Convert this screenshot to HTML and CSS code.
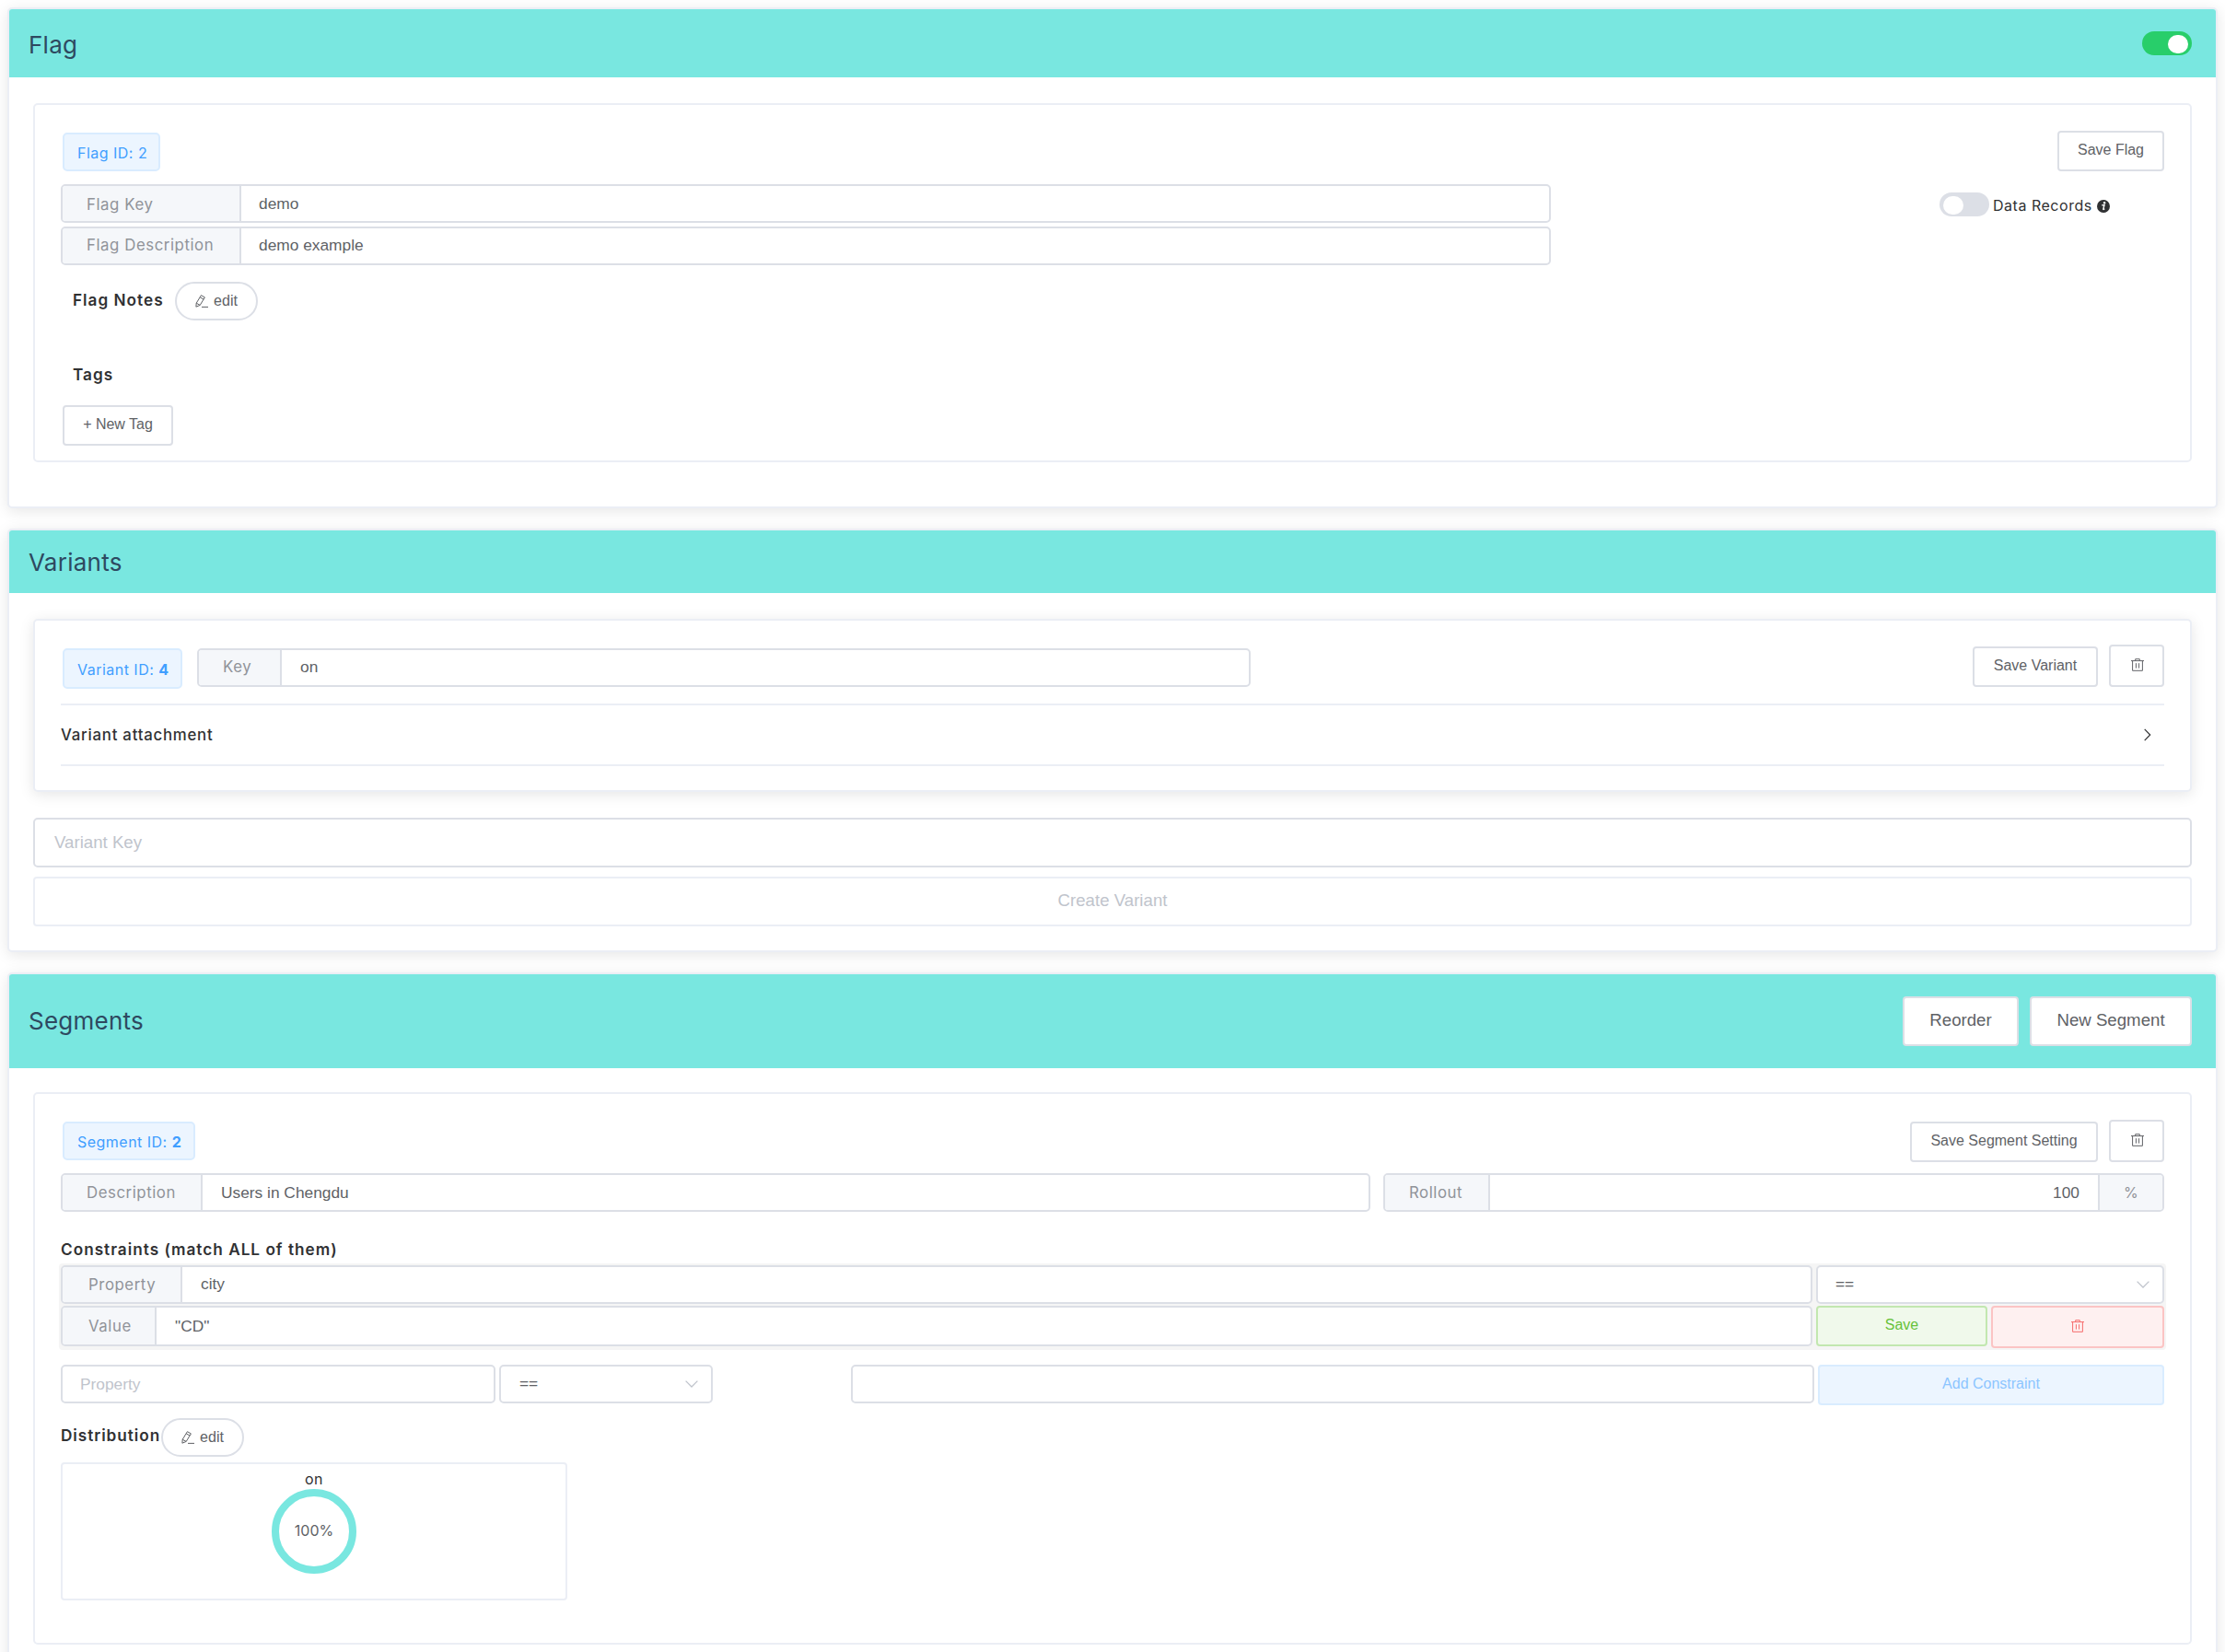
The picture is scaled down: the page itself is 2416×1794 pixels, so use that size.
FILE: index.html
```html
<!DOCTYPE html>
<html lang="en">
<head>
<meta charset="utf-8">
<title>Flag</title>
<link rel="stylesheet" href="styles.css">
</head>
<body>
<svg class="sprite" aria-hidden="true">
  <symbol id="trash" viewBox="0 0 14 14"><path d="M0 2.6H14M4.7 2.5V.7H9.3V2.5M1.6 2.6V13.3H12.4V2.6M5.4 5.2V10.6M8.6 5.2V10.6"/></symbol>
  <symbol id="pencil" viewBox="0 0 14 14"><path d="M.9 13.2L1.2 9.2L6.4 .7L10.4 2.9L5.2 11.4ZM5.2 2.8L9 5M1.2 9.2L5.2 11.4M7 13.4H14"/></symbol>
  <symbol id="down" viewBox="0 0 14 8"><path d="M.6 .6L7 7L13.4 .6"/></symbol>
  <symbol id="right" viewBox="0 0 8 14"><path d="M.7 .8L6.7 7L.7 13.2"/></symbol>
</svg>
<main class="page">
  <section class="card flag-card">
    <header class="card-header"><h2>Flag</h2><span class="switch on"></span></header>
    <div class="card-body">
      <div class="panel flag-panel">
        <div class="row between flag-top"><span class="tag flag-tag">Flag ID: 2</span><button class="btn save-flag">Save Flag</button></div>
        <div class="row between">
          <div class="flag-fields">
            <div class="field"><label class="addon flag-label"><span>Flag Key</span></label><div class="value">demo</div></div>
            <div class="field"><label class="addon flag-label"><span>Flag Description</span></label><div class="value">demo example</div></div>
          </div>
          <div class="row records"><span class="switch"></span><span class="records-label">Data Records</span>
            <svg class="info" viewBox="0 0 14 14"><circle cx="7" cy="7" r="7" fill="#303133"/><circle cx="8.1" cy="3.3" r="1.2" fill="#fff"/><path d="M5.2 5.9L8 5.5L6.8 10.2Q6.9 10.8 8.3 9.8" fill="none" stroke="#fff" stroke-width="1.4"/></svg></div>
        </div>
        <div class="row notes"><h5>Flag Notes</h5><button class="btn round"><svg class="icon"><use href="#pencil"/></svg>edit</button></div>
        <h5 class="tags-title">Tags</h5>
        <button class="btn new-tag">+ New Tag</button>
      </div>
    </div>
  </section>

  <section class="card variants-card">
    <header class="card-header"><h2>Variants</h2></header>
    <div class="card-body">
      <div class="panel variant-panel">
        <div class="row variant-top">
          <span class="tag variant-tag">Variant ID: <b>4</b></span>
          <div class="field variant-key"><label class="addon key-label"><span>Key</span></label><div class="value">on</div></div>
          <div class="row actions"><button class="btn save-variant">Save Variant</button><button class="btn trash"><svg class="icon"><use href="#trash"/></svg></button></div>
        </div>
        <div class="row between attachment"><span>Variant attachment</span><svg class="arrow-right"><use href="#right"/></svg></div>
      </div>
      <div class="input large">Variant Key</div>
      <button class="btn create">Create Variant</button>
    </div>
  </section>

  <section class="card segments-card">
    <header class="card-header"><h2>Segments</h2><div class="row header-actions"><button class="btn big reorder">Reorder</button><button class="btn big new-segment">New Segment</button></div></header>
    <div class="card-body">
      <div class="panel segment-panel">
        <div class="row between segment-top">
          <span class="tag segment-tag">Segment ID: <b>2</b></span>
          <div class="row actions"><button class="btn save-segment">Save Segment Setting</button><button class="btn trash"><svg class="icon"><use href="#trash"/></svg></button></div>
        </div>
        <div class="row segment-fields">
          <div class="field description"><label class="addon description-label"><span>Description</span></label><div class="value">Users in Chengdu</div></div>
          <div class="field rollout"><label class="addon rollout-label"><span>Rollout</span></label><div class="value end">100</div><span class="addon percent">%</span></div>
        </div>
        <h5 class="constraints-title">Constraints (match ALL of them)</h5>
        <div class="constraint">
          <div class="field"><label class="addon property-label"><span>Property</span></label><div class="value">city</div></div>
          <div class="input select"><span>==</span><svg class="arrow-down"><use href="#down"/></svg></div>
          <div class="field tall"><label class="addon value-label"><span>Value</span></label><div class="value">"CD"</div></div>
          <div class="row constraint-actions"><button class="btn success">Save</button><button class="btn danger"><svg class="icon"><use href="#trash"/></svg></button></div>
        </div>
        <div class="row new-constraint">
          <div class="input property">Property</div>
          <div class="input select operator"><span>==</span><svg class="arrow-down"><use href="#down"/></svg></div>
          <div class="input new-value"></div>
          <button class="btn add">Add Constraint</button>
        </div>
        <div class="row distribution-title"><h5>Distribution</h5><button class="btn round"><svg class="icon"><use href="#pencil"/></svg>edit</button></div>
        <div class="distribution"><span class="dist-name">on</span><div class="ring">100%</div></div>
      </div>
    </div>
  </section>
</main>
</body>
</html>
```
FILE: styles.css
```css
* { box-sizing: border-box; }
body { margin: 0; background: #fff; color: #303133; font-family: Inter, sans-serif; font-size: 16px; }
h2, h5 { margin: 0; }
.sprite { position: absolute; width: 0; height: 0; }
svg { fill: none; stroke: currentColor; flex: none; display: block; }
.page { height: 1794px; padding: 8px; overflow: hidden; }
.row { display: flex; align-items: flex-start; }
.between { justify-content: space-between; }

.card { border: 2px solid #ebeef5; border-radius: 5px; background: #fff; box-shadow: 0 3px 16px rgba(0,0,0,.1); margin-bottom: 22px; }
.card-header { display: flex; justify-content: space-between; padding: 0 26px 0 21px; background: #79e7e0; border-radius: 3px 3px 0 0; color: #2e4960; align-items: center; }
.card-header h2 { font-weight: 400; font-size: 26px; letter-spacing: .25px; }
.flag-card { height: 544px; }
.flag-card .card-header { height: 74px; }
.flag-card h2 { padding-top: 2px; }
.flag-card .switch { margin-top: -1px; }
.variants-card { height: 460px; }
.variants-card .card-header { height: 68px; }
.segments-card { height: 760px; }
.segments-card .card-header { height: 102px; }
.segments-card h2 { padding-bottom: 1px; }
.card-body { padding: 28px 26px; }
.segments-card .card-body { padding-top: 26px; }

.panel { border: 2px solid #ebeef5; border-radius: 5px; background: #fff; padding: 0 28px; }
.flag-panel { height: 390px; padding-top: 28px; }
.flag-top { height: 58px; }

.tag { display: flex; align-items: center; height: 44px; margin-left: 2px; padding-left: 14px; border: 2px solid #d9ecff; border-radius: 5px; background: #ecf5ff; color: #409eff; font-size: 16px; letter-spacing: .48px; white-space: pre; padding-top: 1px; }
.flag-tag { width: 106px; height: 42px; margin-top: 2px; }
.variant-tag { width: 130px; margin-top: 4px; }
.segment-tag { width: 144px; height: 42px; margin-top: 2px; }

.btn { display: flex; align-items: center; justify-content: center; height: 44px; padding: 0 0 3px; border: 2px solid #dcdfe6; border-radius: 4px; background: #fff; color: #606266; font: 16px "Liberation Sans", Arial, sans-serif; }
.save-flag { width: 116px; }
.icon { width: 14px; height: 14px; }
.round { width: 90px; height: 42px; padding: 0; border-radius: 21px; gap: 6px; }
.new-tag { width: 120px; margin: 0 0 0 2px; }
.trash { width: 60px; height: 46px; padding: 0 0 2px 2px; }

.switch { position: relative; display: block; width: 54px; height: 26px; border-radius: 13px; background: #dcdfe6; flex: none; }
.switch::after { content: ""; position: absolute; left: 4px; top: 4px; width: 22px; height: 20px; border-radius: 10px; background: #fff; }
.switch.on { background: #28ce6a; }
.switch.on::after { left: 28px; }
.records { width: 244px; padding-top: 10px; align-items: center; }
.records-label { width: 117px; flex: none; padding: 1px 0 0 4px; letter-spacing: .52px; white-space: nowrap; }
.info { width: 14px; height: 14px; stroke: none; margin-top: 2px; }

.flag-fields { width: 1618px; display: grid; gap: 4px; }
.field { display: flex; height: 42px; border: 2px solid #dcdfe6; border-radius: 5px; background: #fff; overflow: hidden; }
.addon { display: flex; align-items: center; flex: none; padding-left: 26px; background: #f5f7fa; color: #909399; border-right: 2px solid #dcdfe6; font-size: 16.8px; letter-spacing: .56px; }
.value { display: flex; align-items: center; flex: 1; padding: 0 20px; color: #606266; font: 17.33px "Liberation Sans", Arial, sans-serif; }
.flag-label { width: 194px; }
.flag-fields .value { padding-left: 19px; }
.flag-fields .field:first-child > * { padding-top: 1px; }
.flag-fields .field:last-child > * { padding-bottom: 2px; }

h5 { font-size: 17.2px; font-weight: 600; letter-spacing: 1px; white-space: nowrap; }
.notes { margin-top: 18px; padding-left: 13px; height: 42px; }
.notes h5 { width: 111px; padding-top: 9px; }
.tags-title { height: 44px; margin: 48px 0 0 13px; }

.variant-panel { height: 188px; padding-top: 26px; box-shadow: 0 3px 16px rgba(0,0,0,.1); }
.variant-top { height: 64px; }
.variant-key { width: 1144px; margin: 4px 0 0 16px; }
.variant-key > * { padding-bottom: 2px; }
.key-label { width: 90px; }
.actions { gap: 12px; margin-left: auto; }
.actions .btn:first-child { margin-top: 2px; }
.save-variant { width: 136px; }
.attachment { height: 68px; align-items: center; border-top: 2px solid #ebeef5; border-bottom: 2px solid #ebeef5; font-size: 16.8px; font-weight: 500; letter-spacing: .76px; padding-right: 14px; }
.arrow-right { width: 8px; height: 14px; stroke-width: 1.2; }
.input { display: flex; align-items: center; height: 42px; border: 2px solid #dcdfe6; border-radius: 5px; background: #fff; color: #c0c4cc; padding: 0 19px; font: 17.33px "Liberation Sans", Arial, sans-serif; }
.input.large { height: 54px; margin-top: 28px; padding-left: 21px; font-size: 18.67px; }
.create { width: 100%; height: 54px; margin-top: 10px; border-color: #ebeef5; color: #c0c4cc; font-size: 18.67px; }

.header-actions { gap: 12px; }
.big { height: 54px; font-size: 18.67px; }
.reorder { width: 126px; }
.new-segment { width: 176px; }
.segment-panel { height: 600px; padding-top: 28px; }
.segment-top { height: 58px; }
.save-segment { width: 204px; }
.segment-fields { gap: 14px; }
.description { width: 1422px; }
.description-label { width: 152px; }
.rollout { width: 848px; }
.rollout-label { width: 114px; }
.end { justify-content: flex-end; }
.percent { width: 70px; border: 0; border-left: 2px solid #dcdfe6; font-size: 16px; }
.constraints-title { height: 26px; margin-top: 30px; }
.constraint { display: grid; grid-template-columns: 1902px 378px; gap: 2px 4px; margin: 0 -2px; padding: 2px; background: #f5f5f5; border-radius: 4px; height: 94px; }
.constraint .addon { padding-left: 28px; }
.constraint .field:first-child > * { padding-bottom: 1px; }
.tall { height: 44px; }
.property-label { width: 130px; }
.value-label { width: 102px; }
.select { justify-content: space-between; color: #606266; padding-right: 14px; }
.select span { padding-bottom: 1px; }
.arrow-down { width: 14px; height: 8px; color: #c0c4cc; stroke-width: 1.3; }
.constraint-actions { gap: 4px; }
.success { width: 186px; background: #f0f9eb; border-color: #c2e7b0; color: #67c23a; }
.danger { width: 188px; height: 46px; background: #fef0f0; border-color: #fbc4c4; color: #f56c6c; padding-bottom: 2px; }
.new-constraint { margin-top: 16px; height: 58px; }
.property { width: 472px; padding-top: 1px; }
.operator { width: 232px; margin-left: 4px; padding-left: 20px; }
.new-value { width: 1046px; margin: 0 4px 0 150px; }
.add { width: 376px; background: #ecf5ff; border-color: #d9ecff; color: #8cc5ff; }
.distribution-title { height: 48px; }
.distribution-title h5 { width: 109px; padding-top: 8px; letter-spacing: .95px; }
.distribution { display: flex; flex-direction: column; align-items: center; width: 550px; height: 150px; border: 2px solid #ebeef5; border-radius: 4px; padding-top: 6px; }
.dist-name { height: 21px; letter-spacing: .5px; }
.ring { display: flex; align-items: center; justify-content: center; width: 92px; height: 92px; border: 8px solid #79e7e0; border-radius: 50%; color: #606266; font-size: 16px; padding-bottom: 2px; }
```
